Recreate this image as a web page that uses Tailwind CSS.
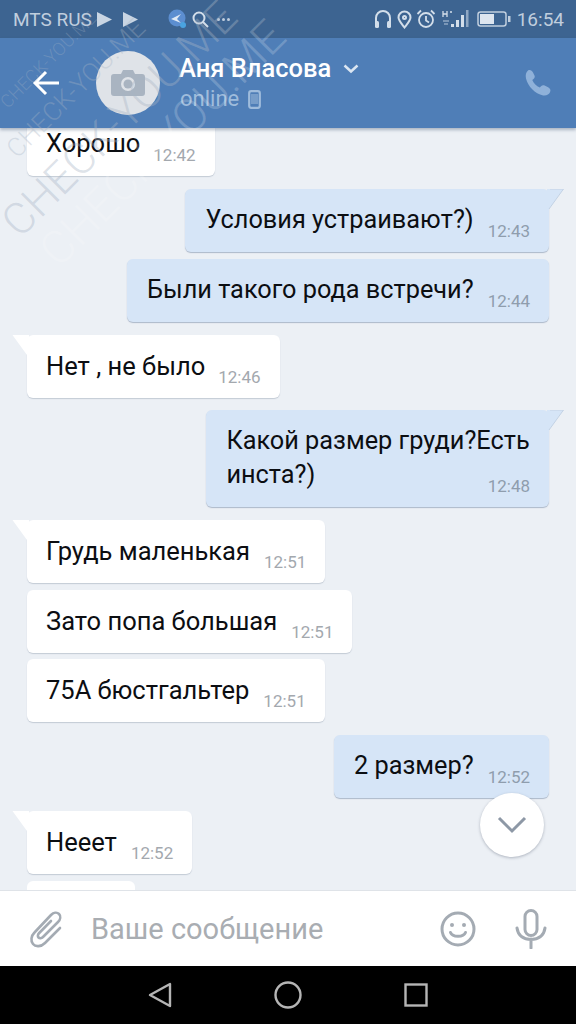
<!DOCTYPE html>
<html lang="ru">
<head>
<meta charset="utf-8">
<script src="https://cdn.jsdelivr.net/npm/@tailwindcss/browser@4"></script>
<title>Чат</title>
</head>
<body class="m-0">
<div class="relative w-[576px] h-[1024px] overflow-hidden flex flex-col bg-[#ecf0f5] font-['Roboto',sans-serif]">

  <!-- status bar -->
  <div class="h-[38px] shrink-0 bg-[#3d6491] flex items-center justify-between pl-[13px] pr-[12px] text-[#c0cede]">
    <div class="flex items-center">
      <span class="text-[19px] leading-none">MTS RUS</span>
      <svg class="ml-[5px]" width="15" height="15" viewBox="0 0 14 14"><path d="M0 0l14 7-14 7z" fill="#c9d5e3"/></svg>
      <svg class="ml-[11px]" width="15" height="15" viewBox="0 0 14 14"><path d="M0 0l14 7-14 7z" fill="#c9d5e3"/></svg>
      <svg class="ml-[29px]" width="22" height="22" viewBox="0 0 22 22"><circle cx="10" cy="10" r="8.500" fill="#5c8ed0"/><path d="M4 11l10-5-4 5 4 4z" fill="#dfe9f5"/><circle cx="16" cy="17" r="3" fill="#4aa3e0"/></svg>
      <svg class="ml-[2px]" width="19" height="19" viewBox="0 0 19 19" fill="none" stroke="#d3deea" stroke-width="2"><circle cx="8" cy="8" r="5.500"/><path d="M12 12l5 5"/></svg>
      <span class="ml-[7px] flex gap-[2px]"><i class="w-[3px] h-[3px] rounded-full bg-[#c0cede]"></i><i class="w-[3px] h-[3px] rounded-full bg-[#c0cede]"></i><i class="w-[3px] h-[3px] rounded-full bg-[#c0cede]"></i></span>
    </div>
    <div class="flex items-center">
      <svg width="18" height="20" viewBox="0 0 18 20" fill="none"><path d="M2 14V9a7 7 0 0114 0v5" stroke="#d3deea" stroke-width="2"/><rect x="1" y="12" width="4" height="7" rx="1.500" fill="#d3deea"/><rect x="13" y="12" width="4" height="7" rx="1.500" fill="#d3deea"/></svg>
      <svg class="ml-[5px]" width="15" height="19" viewBox="0 0 15 19" fill="none" stroke="#d3deea" stroke-width="2"><path d="M7.500 17.500C4 13 1.500 10.500 1.500 7.500a6 6 0 0112 0c0 3-2.500 5.500-6 10z"/><circle cx="7.500" cy="7.500" r="1.500"/></svg>
      <svg class="ml-[4px]" width="20" height="20" viewBox="0 0 20 20" fill="none" stroke="#d3deea" stroke-width="1.800"><circle cx="10" cy="11" r="7"/><path d="M10 7v4.500l3 2M1.500 5L5 1.500M18.500 5L15 1.500"/></svg>
      <svg class="ml-[6px]" width="28" height="20" viewBox="0 0 28 20"><path d="M1 2v6M5 2v6M1 5h4M8 3h2" stroke="#d3deea" stroke-width="1.300" fill="none"/><path d="M1 12h6M2 15h4" stroke="#8fa7c3" stroke-width="1.300"/><rect x="9" y="15" width="3" height="3" fill="#d3deea"/><rect x="14" y="11" width="3" height="7" fill="#d3deea"/><rect x="19" y="6" width="3" height="12" fill="#d3deea"/><rect x="24" y="1" width="2.500" height="17" fill="#8fa7c3"/></svg>
      <svg class="ml-[7px]" width="34" height="18" viewBox="0 0 34 18" fill="none"><rect x="1" y="2" width="28" height="14" rx="2.500" stroke="#c0cede" stroke-width="1.500"/><rect x="3" y="4" width="14" height="10" fill="#dde5ef"/><rect x="31" y="6" width="2.500" height="6" fill="#c0cede"/></svg>
      <span class="ml-[6px] text-[19px] leading-none">16:54</span>
    </div>
  </div>

  <!-- header -->
  <div class="relative z-10 h-[90px] shrink-0 bg-[#4f7eb7] shadow-[0_2px_3px_rgba(50,70,100,0.35)] flex items-center pl-[32px] pr-[23px]">
    <svg width="28" height="26" viewBox="0 0 28 26" fill="none" stroke="#fff" stroke-width="3"><path d="M27 13H3M14 2L3 13l11 11"/></svg>
    <div class="ml-[36px] w-[64px] h-[64px] rounded-full bg-[#dfe3e8] flex items-center justify-center">
      <svg width="34" height="28" viewBox="0 0 34 28"><path d="M3 5h7l2-4h10l2 4h7a3 3 0 013 3v16a3 3 0 01-3 3H3a3 3 0 01-3-3V8a3 3 0 013-3z" fill="#a9b4c1"/><circle cx="17" cy="15" r="7" fill="#dfe3e8"/><circle cx="17" cy="15" r="4.500" fill="#a9b4c1"/></svg>
    </div>
    <div class="ml-[20px] flex-1 mt-[2px]">
      <div class="flex items-center h-[30px]">
        <span class="-ml-[1px] text-[25.500px] leading-none font-medium text-white">Аня Власова</span>
        <svg class="ml-[12px]" width="16" height="10" viewBox="0 0 16 10" fill="none" stroke="#dbe6f2" stroke-width="2.500"><path d="M1.500 1.500L8 7.500l6.500-6"/></svg>
      </div>
      <div class="flex items-center h-[30px]">
        <span class="text-[22px] leading-none text-[#9fbcdc]">online</span>
        <svg class="ml-[9px]" width="13" height="19" viewBox="0 0 13 19" fill="none"><rect x="1.200" y="1.200" width="10.600" height="16.600" rx="2" stroke="#9fbcdc" stroke-width="2.200"/><rect x="3" y="4" width="7" height="10" fill="#9fbcdc" opacity=".5"/></svg>
      </div>
    </div>
    <svg width="28" height="28" viewBox="0 0 28 28"><path d="M3 1.500c2-1 4 0 5 2l1.500 3c.6 1.300.2 2.500-1 3.500l-1.200 1c1.500 3.500 4 6 7.500 7.500l1.200-1.200c1-1.100 2.300-1.400 3.600-.8l3.500 1.700c2 1 2.900 2.800 2 4.800-1 2.500-3.800 4-7 3.400C10 24.800 3 17.500 1 9.500.3 6 1 3 3 1.500z" fill="#8fb1d9"/></svg>
  </div>

  <!-- messages -->
  <div class="relative flex-1 min-h-0 overflow-hidden flex flex-col px-[27px] text-[25.500px] leading-[34px] text-[#0c0e12]">

    <div class="-mt-[15px] self-start flex items-end bg-white rounded-[6px] shadow-[0_1px_1px_rgba(120,135,155,0.35)] px-[19px] pt-[13px] pb-[16px]">
      <span>Хорошо</span><span class="ml-[13px] -mb-[5px] text-[17px] leading-[20px] text-[#a3a8ae]">12:42</span>
    </div>

    <div class="relative mt-[13px] self-end flex items-end bg-[#d6e5f7] rounded-[6px] shadow-[0_1px_1px_rgba(110,130,160,0.5)] pl-[20px] pr-[19px] pt-[14px] pb-[15px]">
      <svg class="absolute -right-[16px] top-0" width="18" height="24" viewBox="0 0 18 24"><path d="M0 0h16.500L2 20v4H0z" fill="#d6e5f7"/><path d="M3 0h13.500L2 20" fill="none" stroke="#c3d2e4"/></svg>
      <span class="text-[25.300px]">Условия устраивают?)</span><span class="ml-[14px] -mb-[4px] text-[17px] leading-[20px] text-[#8f9dad]">12:43</span>
    </div>

    <div class="mt-[7px] self-end flex items-end bg-[#d6e5f7] rounded-[6px] shadow-[0_1px_1px_rgba(110,130,160,0.5)] pl-[20px] pr-[19px] pt-[14px] pb-[15px]">
      <span class="text-[25.300px]">Были такого рода встречи?</span><span class="ml-[14px] -mb-[4px] text-[17px] leading-[20px] text-[#8f9dad]">12:44</span>
    </div>

    <div class="relative mt-[13px] self-start flex items-end bg-white rounded-[6px] shadow-[0_1px_1px_rgba(120,135,155,0.35)] px-[19px] pt-[14px] pb-[15px]">
      <svg class="absolute -left-[16px] top-0" width="18" height="26" viewBox="0 0 18 26"><path d="M18 0H1.500L16 20v6h2z" fill="#fff"/></svg>
      <span>Нет , не было</span><span class="ml-[13px] -mb-[4px] text-[17px] leading-[20px] text-[#a3a8ae]">12:46</span>
    </div>

    <div class="relative mt-[12px] self-end flex items-end bg-[#d6e5f7] rounded-[6px] shadow-[0_1px_1px_rgba(110,130,160,0.5)] pl-[20px] pr-[19px] pt-[14px] pb-[15px]">
      <svg class="absolute -right-[16px] top-0" width="18" height="24" viewBox="0 0 18 24"><path d="M0 0h16.500L2 20v4H0z" fill="#d6e5f7"/><path d="M3 0h13.500L2 20" fill="none" stroke="#c3d2e4"/></svg>
      <span class="text-[25.300px]">Какой размер груди?Есть<br>инста?)</span><span class="ml-[-42px] -mb-[4px] text-[17px] leading-[20px] text-[#8f9dad]">12:48</span>
    </div>

    <div class="relative mt-[13px] self-start flex items-end bg-white rounded-[6px] shadow-[0_1px_1px_rgba(120,135,155,0.35)] px-[19px] pt-[14px] pb-[15px]">
      <svg class="absolute -left-[16px] top-0" width="18" height="26" viewBox="0 0 18 26"><path d="M18 0H1.500L16 20v6h2z" fill="#fff"/></svg>
      <span>Грудь маленькая</span><span class="ml-[14px] -mb-[4px] text-[17px] leading-[20px] text-[#a3a8ae]">12:51</span>
    </div>

    <div class="mt-[7px] self-start flex items-end bg-white rounded-[6px] shadow-[0_1px_1px_rgba(120,135,155,0.35)] px-[19px] pt-[14px] pb-[15px]">
      <span>Зато попа большая</span><span class="ml-[14px] -mb-[4px] text-[17px] leading-[20px] text-[#a3a8ae]">12:51</span>
    </div>

    <div class="mt-[6px] self-start flex items-end bg-white rounded-[6px] shadow-[0_1px_1px_rgba(120,135,155,0.35)] px-[19px] pt-[14px] pb-[15px]">
      <span>75А бюстгальтер</span><span class="ml-[14px] -mb-[4px] text-[17px] leading-[20px] text-[#a3a8ae]">12:51</span>
    </div>

    <div class="mt-[13px] self-end flex items-end bg-[#d6e5f7] rounded-[6px] shadow-[0_1px_1px_rgba(110,130,160,0.5)] pl-[20px] pr-[19px] pt-[14px] pb-[15px]">
      <span class="text-[25.300px]">2 размер?</span><span class="ml-[14px] -mb-[4px] text-[17px] leading-[20px] text-[#8f9dad]">12:52</span>
    </div>

    <div class="relative mt-[13px] self-start flex items-end bg-white rounded-[6px] shadow-[0_1px_1px_rgba(120,135,155,0.35)] px-[19px] pt-[14px] pb-[15px]">
      <svg class="absolute -left-[16px] top-0" width="18" height="26" viewBox="0 0 18 26"><path d="M18 0H1.500L16 20v6h2z" fill="#fff"/></svg>
      <span>Нееет</span><span class="ml-[14px] -mb-[4px] text-[17px] leading-[20px] text-[#a3a8ae]">12:52</span>
    </div>

    <div class="mt-[7px] self-start w-[108px] h-[63px] shrink-0 bg-white rounded-[6px]"></div>

    <!-- scroll-to-bottom -->
    <div class="absolute left-[480px] top-[665px] w-[64px] h-[64px] rounded-full bg-white shadow-[0_1px_3px_rgba(80,90,110,0.4)] flex items-center justify-center">
      <svg width="30" height="18" viewBox="0 0 30 18" fill="none" stroke="#8d98a6" stroke-width="3"><path d="M2 2l13 13L28 2"/></svg>
    </div>
  </div>

  <!-- composer -->
  <div class="relative z-10 h-[76px] shrink-0 bg-white border-t border-[#dfe3e8] flex items-center pl-[29px] pr-[29px]">
    <svg width="34" height="38" viewBox="0 0 34 38" fill="none" stroke="#a4abb3" stroke-width="2.600" stroke-linecap="round"><path d="M31 18L16 33c-4 4-9.500 4-12 1s-2-8 1.500-11.500L22 5c2.500-2.500 6-3 8-1s1.500 5.500-1 8L14 27c-1.500 1.500-3.500 1.500-4.500.5s-.8-3 .7-4.500L22 11"/></svg>
    <span class="ml-[28px] mt-[1px] flex-1 text-[29px] leading-none text-[#a9adb2]">Ваше сообщение</span>
    <svg width="36" height="36" viewBox="0 0 36 36" fill="none" stroke="#a4abb3" stroke-width="3"><circle cx="18" cy="18" r="16"/><circle cx="12" cy="14" r="2" fill="#a4abb3" stroke="none"/><circle cx="24" cy="14" r="2" fill="#a4abb3" stroke="none"/><path d="M10.500 21.500c2 5 13 5 15 0" stroke-linecap="round"/></svg>
    <svg class="ml-[39px]" width="32" height="40" viewBox="0 0 32 40" fill="none" stroke="#a4abb3" stroke-width="3"><rect x="10" y="1.500" width="12" height="25" rx="6"/><path d="M2 19c1 8 7 11.500 14 11.500S29 27 30 19M16 30v9" stroke-linecap="round"/></svg>
  </div>

  <!-- navigation -->
  <div class="h-[58px] shrink-0 bg-black flex items-center justify-center gap-[102px]">
    <svg width="24" height="26" viewBox="0 0 24 26" fill="none" stroke="#b5b5b5" stroke-width="2.400" stroke-linejoin="round"><path d="M22 2v22L2 13z"/></svg>
    <svg width="28" height="28" viewBox="0 0 28 28" fill="none" stroke="#b5b5b5" stroke-width="2.400"><circle cx="14" cy="14" r="12.500"/></svg>
    <svg width="24" height="24" viewBox="0 0 24 24" fill="none" stroke="#b5b5b5" stroke-width="2.400"><rect x="1.500" y="1.500" width="21" height="21"/></svg>
  </div>

  <!-- watermark -->
  <div class="absolute inset-0 z-20 pointer-events-none overflow-hidden font-light">
    <span class="absolute left-[-36px] top-[97px] text-[44px] leading-none whitespace-nowrap text-[#a8b5c5]/40 -rotate-45">CHECK-YOU.ME</span>
    <span class="absolute left-[0px] top-[120px] text-[46px] leading-none whitespace-nowrap text-white/20 -rotate-45">CHECK-YOU.ME</span>
    <span class="absolute left-[-15px] top-[51px] text-[18px] leading-none whitespace-nowrap text-[#a8b5c5]/30 -rotate-45">CHECK-YOU.ME</span>
    <span class="absolute left-[-16px] top-[75px] text-[26px] leading-none whitespace-nowrap text-[#a8b5c5]/35 -rotate-45">CHECK-YOU.ME</span>
  </div>
</div>
</body>
</html>
